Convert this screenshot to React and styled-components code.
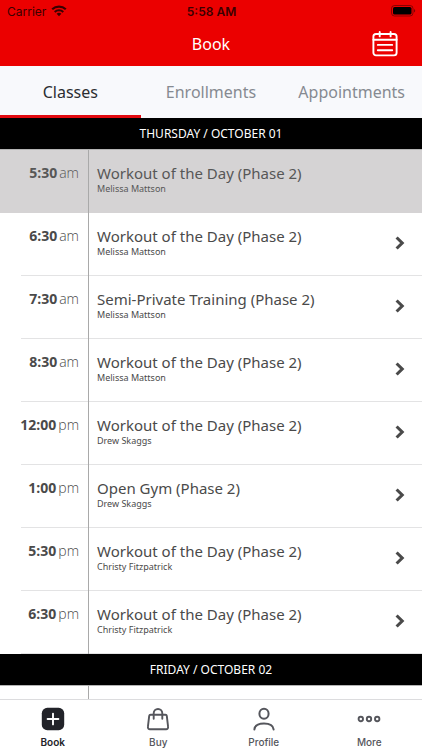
import React, { useState } from "react";
import styled, { createGlobalStyle } from "styled-components";

const days = [
  {
    date: "THURSDAY / OCTOBER 01",
    classes: [
      { time: "5:30", half: "am", name: "Workout of the Day (Phase 2)", coach: "Melissa Mattson", past: true },
      { time: "6:30", half: "am", name: "Workout of the Day (Phase 2)", coach: "Melissa Mattson" },
      { time: "7:30", half: "am", name: "Semi-Private Training (Phase 2)", coach: "Melissa Mattson" },
      { time: "8:30", half: "am", name: "Workout of the Day (Phase 2)", coach: "Melissa Mattson" },
      { time: "12:00", half: "pm", name: "Workout of the Day (Phase 2)", coach: "Drew Skaggs" },
      { time: "1:00", half: "pm", name: "Open Gym (Phase 2)", coach: "Drew Skaggs" },
      { time: "5:30", half: "pm", name: "Workout of the Day (Phase 2)", coach: "Christy Fitzpatrick" },
      { time: "6:30", half: "pm", name: "Workout of the Day (Phase 2)", coach: "Christy Fitzpatrick" },
    ],
  },
  { date: "FRIDAY / OCTOBER 02", classes: [] },
];

const tabs = ["Classes", "Enrollments", "Appointments"];

const WifiIcon = () => (
  <svg width="16" height="12" viewBox="0 0 16 12" aria-hidden="true">
    <path d="M1.2 4.3a9.8 9.8 0 0 1 13.6 0" fill="none" stroke="currentColor" strokeWidth="2.2" />
    <path d="M3.7 7a6.2 6.2 0 0 1 8.6 0" fill="none" stroke="currentColor" strokeWidth="2" />
    <path d="M5.6 8.8a3.5 3.5 0 0 1 4.8 0L8 11.3z" fill="currentColor" />
  </svg>
);

const BatteryIcon = () => (
  <svg width="25" height="12" viewBox="0 0 25 12" aria-hidden="true">
    <rect x="0.5" y="0.5" width="21.5" height="10.5" rx="3" fill="none" stroke="currentColor" opacity="0.4" />
    <rect x="2" y="2" width="18.5" height="7.5" rx="1.6" fill="currentColor" />
    <path d="M23 4c1.6.6 1.6 2.8 0 3.4z" fill="currentColor" opacity="0.45" />
  </svg>
);

const CalendarIcon = () => (
  <svg width="26" height="26" viewBox="0 0 26 26" fill="none" stroke="currentColor" strokeWidth="1.9" strokeLinecap="round" aria-hidden="true">
    <rect x="1.4" y="3" width="23.2" height="21.4" rx="2.6" />
    <path d="M1.4 8.8h23.2M7.7 1v4.4M18.6 1v4.4M5.8 13.9h14.4M5.8 19.3h14.4" />
  </svg>
);

const ChevronIcon = () => (
  <svg width="10" height="14" viewBox="0 0 10 14" fill="none" stroke="currentColor" strokeWidth="3.1" aria-hidden="true">
    <path d="M1.6 1.5 7.2 7 1.6 12.5" />
  </svg>
);

const BookIcon = () => (
  <svg width="24" height="24" viewBox="0 0 24 24" aria-hidden="true">
    <rect x="0.8" y="0.8" width="22.4" height="22.4" rx="5.5" fill="currentColor" />
    <path d="M12 6.6v10.8M6.6 12h10.8" stroke="#fff" strokeWidth="1.9" strokeLinecap="round" />
  </svg>
);

const BuyIcon = () => (
  <svg width="24" height="24" viewBox="0 0 24 24" fill="none" stroke="currentColor" strokeWidth="1.9" strokeLinecap="round" strokeLinejoin="round" aria-hidden="true">
    <path d="M4.6 7.7h14.8a1.4 1.4 0 0 1 1.4 1.2l1.3 11a2 2 0 0 1-2 2.3H3.9a2 2 0 0 1-2-2.3l1.3-11a1.4 1.4 0 0 1 1.4-1.2z" />
    <path d="M7.7 11.8V6.3a4.3 4.3 0 0 1 8.6 0v5.5" />
  </svg>
);

const ProfileIcon = () => (
  <svg width="24" height="24" viewBox="0 0 24 24" fill="none" stroke="currentColor" strokeWidth="2" strokeLinecap="round" aria-hidden="true">
    <ellipse cx="12" cy="6.8" rx="4.6" ry="5" />
    <path d="M2.4 22.4c.5-4.2 3.8-5.9 9.6-5.9s9.1 1.7 9.6 5.9" />
  </svg>
);

const MoreIcon = () => (
  <svg width="24" height="24" viewBox="0 0 24 24" fill="none" stroke="currentColor" strokeWidth="1.9" aria-hidden="true">
    <circle cx="3.8" cy="12" r="2.2" />
    <circle cx="12" cy="12" r="2.2" />
    <circle cx="20.2" cy="12" r="2.2" />
  </svg>
);

const navItems = [
  { label: "Book", Icon: BookIcon },
  { label: "Buy", Icon: BuyIcon },
  { label: "Profile", Icon: ProfileIcon },
  { label: "More", Icon: MoreIcon },
];

const App = () => {
  const [tab, setTab] = useState("Classes");
  const [page, setPage] = useState("Book");

  return (
    <Screen>
      <GlobalStyle />
      <Header>
        <StatusBar>
          <Carrier>
            Carrier <WifiIcon />
          </Carrier>
          <Clock>5:58 AM</Clock>
          <Battery>
            <BatteryIcon />
          </Battery>
        </StatusBar>
        <TitleBar>
          <Title>Book</Title>
          <CalendarBtn aria-label="Pick a date">
            <CalendarIcon />
          </CalendarBtn>
        </TitleBar>
      </Header>
      <Tabs>
        {tabs.map((name) => (
          <Tab key={name} $active={name === tab} onClick={() => setTab(name)}>
            {name}
          </Tab>
        ))}
      </Tabs>
      <Schedule>
        {days.map((day) => (
          <Day key={day.date}>
            <DayTitle>{day.date}</DayTitle>
            <ClassList>
              {day.classes.map((item) => (
                <li key={item.time + item.half}>
                  <ClassRow disabled={item.past}>
                    <TimeCell>
                      <Time>{item.time}</Time>
                      <Half>{item.half}</Half>
                    </TimeCell>
                    <ClassCell>
                      <ClassInfo>
                        <ClassName>{item.name}</ClassName>
                        <Coach>{item.coach}</Coach>
                      </ClassInfo>
                      {!item.past && <ChevronIcon />}
                    </ClassCell>
                  </ClassRow>
                </li>
              ))}
            </ClassList>
            {day.classes.length === 0 && <EmptyDay />}
          </Day>
        ))}
      </Schedule>
      <BottomNav>
        {navItems.map(({ label, Icon }) => (
          <NavBtn key={label} $active={label === page} onClick={() => setPage(label)}>
            <Icon />
            {label}
          </NavBtn>
        ))}
      </BottomNav>
    </Screen>
  );
};

// start styling

const GlobalStyle = createGlobalStyle`
  * {
    box-sizing: border-box;
  }

  body {
    margin: 0;
    font-family: "Noto Sans", "Open Sans", sans-serif;
    color: #4a4a4a;
    background: white;
  }

  button {
    border: none;
    padding: 0;
    margin: 0;
    background: none;
    color: inherit;
    font: inherit;
    cursor: pointer;
  }
`;

const Screen = styled.div`
  display: flex;
  flex-direction: column;
  height: 100vh;
`;

const Header = styled.header`
  background: #eb0000;
`;

const StatusBar = styled.div`
  display: grid;
  grid-template-columns: 1fr auto 1fr;
  align-items: center;
  height: 22px;
  padding: 0 6px 0 7px;
  font-family: Inter, sans-serif;
  font-size: 12px;
  color: #3a0000;
`;

const Carrier = styled.span`
  display: flex;
  align-items: center;
  gap: 5px;
`;

const Clock = styled.span`
  font-weight: 600;
`;

const Battery = styled.span`
  display: flex;
  justify-content: flex-end;
  color: black;
`;

const TitleBar = styled.div`
  display: grid;
  grid-template-columns: 1fr auto 1fr;
  align-items: center;
  height: 44px;
  padding: 0 24px;
  color: white;
`;

const Title = styled.h1`
  grid-column: 2;
  margin: 0;
  font-size: 16px;
  font-weight: 400;
  line-height: 24px;
`;

const CalendarBtn = styled.button`
  display: flex;
  justify-self: end;
`;

const Tabs = styled.nav`
  display: grid;
  grid-template-columns: repeat(3, 1fr);
  height: 52px;
  background: #f8f9fc;
`;

const Tab = styled.button`
  border-top: 3px solid transparent;
  border-bottom: 3px solid ${({ $active }) => ($active ? "#e20a10" : "transparent")};
  font-size: 16px;
  color: ${({ $active }) => ($active ? "#2b2d31" : "#868a91")};
`;

const Schedule = styled.main`
  display: flex;
  flex-direction: column;
  flex: 1;
  min-height: 0;
  overflow: hidden;
`;

const Day = styled.section`
  flex: none;
`;

const DayTitle = styled.h2`
  margin: 0;
  border-bottom: 1px solid #b4b4b4;
  font-size: 12px;
  font-weight: 400;
  line-height: 31px;
  text-align: center;
  color: white;
  background: black;
`;

const ClassList = styled.ul`
  list-style: none;
  margin: 0;
  padding: 0;
`;

const ClassRow = styled.button`
  display: grid;
  grid-template-columns: 89px 1fr;
  width: 100%;
  height: 63px;
  text-align: left;
  color: #4a4a4a;
  background: linear-gradient(#e3e3e4, #e3e3e4) 21px 100% / 100% 1px no-repeat;

  &:disabled {
    background: #d5d3d4;
    color: #575757;
    cursor: default;
  }
`;

const TimeCell = styled.span`
  display: flex;
  justify-content: flex-end;
  align-items: flex-start;
  gap: 2px;
  height: 100%;
  padding: 13px 9px 0 0;
  border-right: 1px solid #a9a9a9;
  font-family: "Open Sans", sans-serif;
  font-size: 14px;
  line-height: 20px;
`;

const Time = styled.span`
  font-weight: 700;
`;

const Half = styled.span`
  font-weight: 300;
`;

const ClassCell = styled.span`
  display: flex;
  justify-content: space-between;
  align-items: center;
  height: 100%;
  padding: 0 17px 4px 8px;
`;

const ClassInfo = styled.span`
  display: flex;
  flex-direction: column;
  align-self: flex-start;
  padding-top: 13px;
`;

const ClassName = styled.span`
  font-size: 15px;
  line-height: 20px;
`;

const Coach = styled.span`
  font-size: 9px;
  line-height: 12px;
`;

const EmptyDay = styled.div`
  width: 89px;
  height: 63px;
  border-right: 1px solid #a9a9a9;
`;

const BottomNav = styled.nav`
  display: grid;
  grid-template-columns: repeat(4, 1fr);
  height: 51px;
  border-top: 1px solid #dcdcde;
  background: white;
`;

const NavBtn = styled.button`
  display: flex;
  flex-direction: column;
  align-items: center;
  gap: 4px;
  padding-top: 7px;
  font-family: Inter, sans-serif;
  font-size: 10px;
  font-weight: ${({ $active }) => ($active ? 600 : 500)};
  line-height: 14px;
  color: ${({ $active }) => ($active ? "#222329" : "#55565c")};
`;

// end styling

export default App;
